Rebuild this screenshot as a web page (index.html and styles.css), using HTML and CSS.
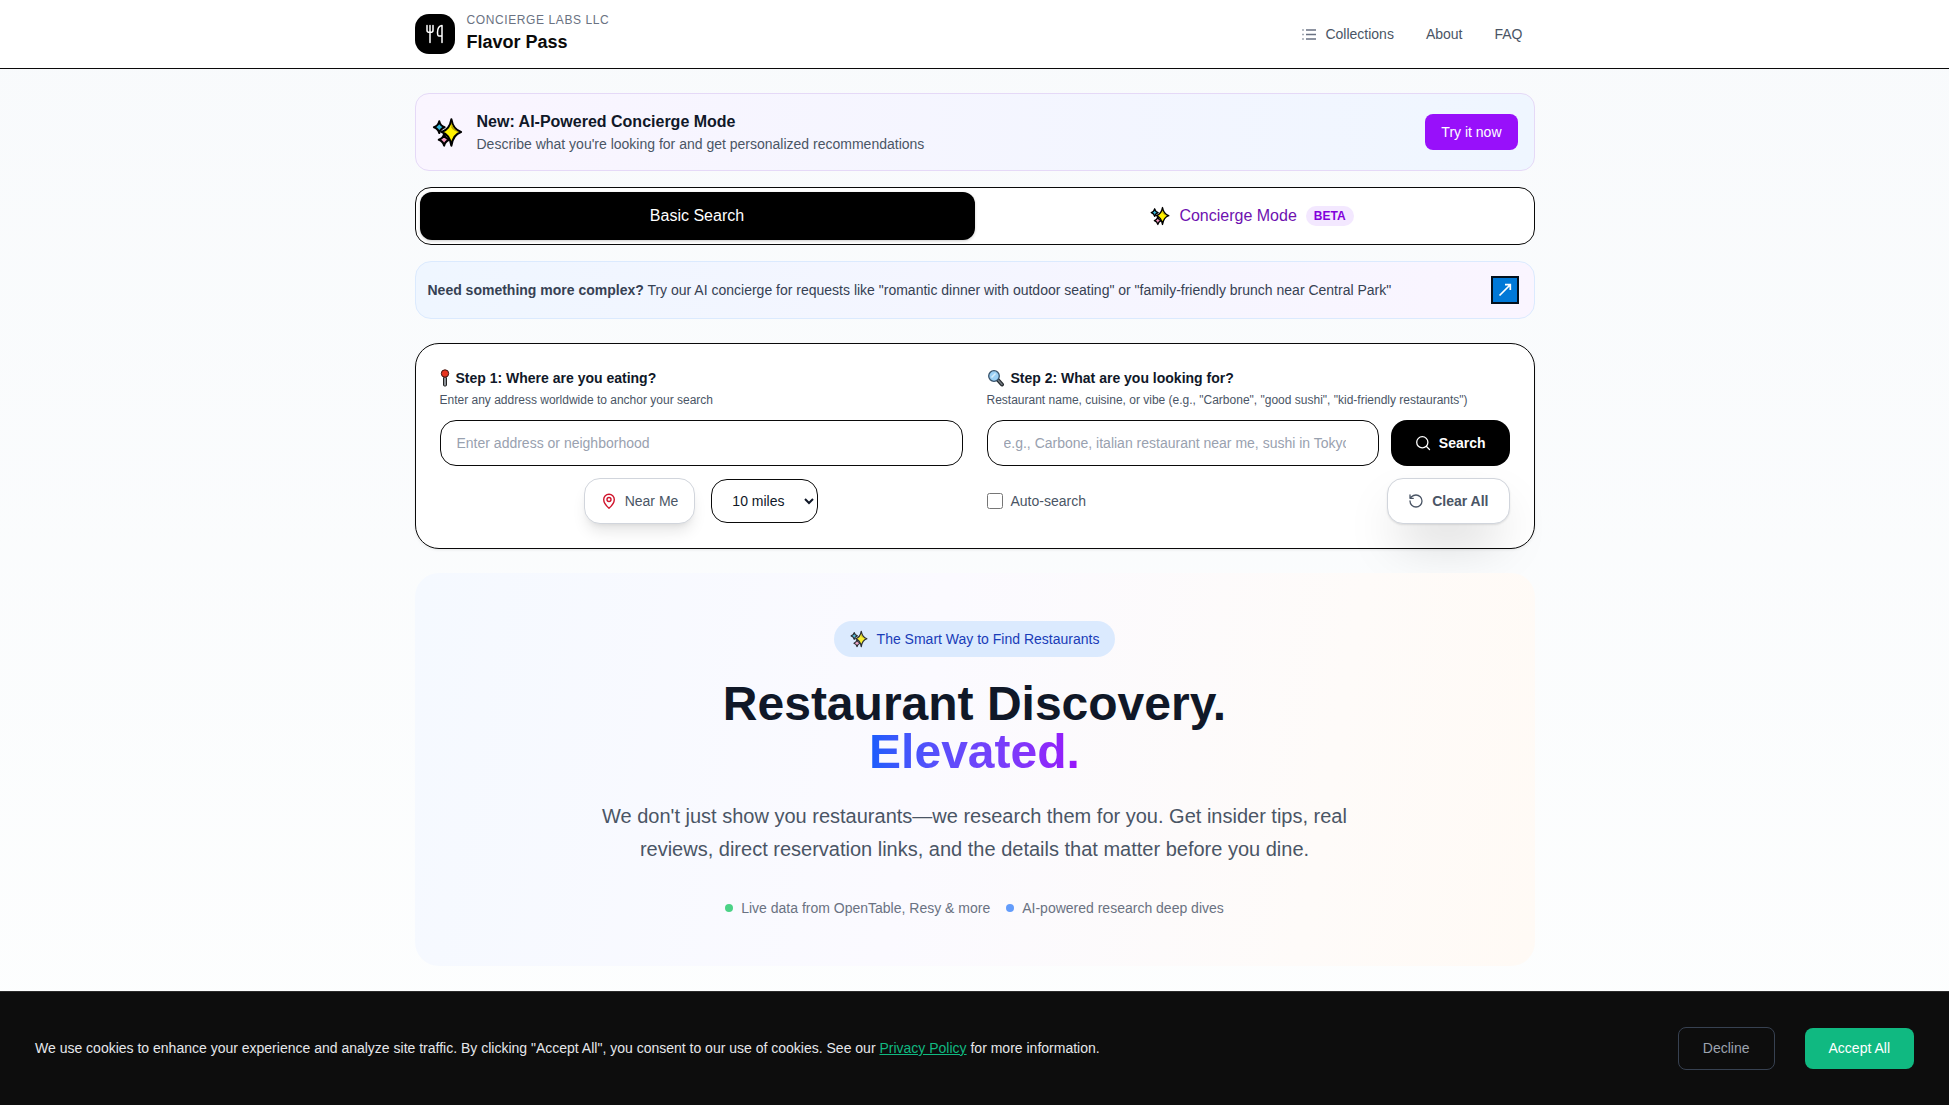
FILE: index.html
```html
<!DOCTYPE html>
<html lang="en">
<head>
<meta charset="utf-8">
<meta name="viewport" content="width=device-width, initial-scale=1">
<title>Flavor Pass</title>
<link rel="stylesheet" href="styles.css">
</head>
<body>
<svg class="defs" aria-hidden="true">
  <symbol id="sparkles" viewBox="0 0 32 32">
    <g stroke="#000" stroke-width="2.2" stroke-linejoin="round">
      <path fill="#35b8dc" d="M7.500 4.500Q8.500 9 13 10.500Q8.500 12 7.500 16.500Q6.500 12 2 10.500Q6.500 9 7.500 4.500Z"/>
      <path fill="#f59ac0" d="M12.500 17.500Q13.500 22 18 23.500Q13.500 25 12.500 29.500Q11.500 25 7 23.500Q11.500 22 12.500 17.500Z"/>
      <path fill="#fff100" d="M20 2.500Q21.800 13 30 15.500Q21.800 18 20 29.500Q18.200 18 10 15.500Q18.200 13 20 2.500Z"/>
    </g>
    <path fill="#b5a200" d="M20 5Q21.200 13 28 15.500Q22 14.500 20 11Z"/>
  </symbol>
</svg>

<header class="site-header">
  <div class="container header-row">
    <a class="brand" href="#">
      <span class="logo">
        <svg viewBox="0 0 20 20" width="20" height="20" fill="none" stroke="#fff" stroke-width="1.500" stroke-linecap="round" stroke-linejoin="round" aria-hidden="true">
          <path d="M2 1.500V6.500Q2 8.500 5 8.500Q8 8.500 8 6.500V1.500M5 1.500V18.500M17 18.500V1.500Q12.500 2 12.500 8.500Q12.500 12 14 12H17"/>
        </svg>
      </span>
      <span class="brand-text">
        <span class="company">Concierge Labs LLC</span>
        <span class="product">Flavor Pass</span>
      </span>
    </a>
    <nav class="nav">
      <a href="#"><svg viewBox="0 0 16 16" width="16" height="16" stroke="#6a7282" stroke-width="1.700" aria-hidden="true"><path d="M5 4H15M5 8.500H15M5 13H15"/><path stroke="#a3a9b3" d="M1 4H3M1 8.500H3M1 13H3"/></svg>Collections</a>
      <a href="#">About</a>
      <a href="#">FAQ</a>
    </nav>
  </div>
</header>

<main class="container main">
  <section class="announce">
    <svg class="announce-icon" viewBox="0 0 32 32" aria-hidden="true"><use href="#sparkles"/></svg>
    <div class="announce-text">
      <h2>New: AI-Powered Concierge Mode</h2>
      <p>Describe what you're looking for and get personalized recommendations</p>
    </div>
    <button class="try" type="button">Try it now</button>
  </section>

  <div class="tabs">
    <button class="tab active" type="button">Basic Search</button>
    <button class="tab" type="button"><svg width="20" height="20" aria-hidden="true"><use href="#sparkles"/></svg>Concierge Mode <span class="beta">BETA</span></button>
  </div>

  <section class="tip">
    <p><strong>Need something more complex?</strong> Try our AI concierge for requests like "romantic dinner with outdoor seating" or "family-friendly brunch near Central Park"</p>
    <button class="tip-go" type="button" aria-label="Open concierge">
      <svg viewBox="0 0 28 28" width="28" height="28" aria-hidden="true"><rect x="1" y="1" width="26" height="26" fill="#0078d7" stroke="#04101c" stroke-width="2"/><path d="M8.500 19.500L19 9M14 8.700H19.300V14" fill="none" stroke="#fff" stroke-width="1.700"/></svg>
    </button>
  </section>

  <form class="search-card">
    <div class="field">
      <label for="where"><svg class="pin" viewBox="0 0 10 18" width="10" height="18" aria-hidden="true"><rect x="3.500" y="8" width="3" height="9" rx="1" fill="#8d9298" stroke="#222" stroke-width="1"/><circle cx="5" cy="4.500" r="3.700" fill="#e8341f" stroke="#3d1511" stroke-width="1"/></svg>Step 1: Where are you eating?</label>
      <p class="hint">Enter any address worldwide to anchor your search</p>
      <input class="text-input" id="where" type="text" placeholder="Enter address or neighborhood">
      <div class="controls centered">
        <button class="near" type="button"><svg viewBox="0 0 16 16" width="16" height="16" fill="none" stroke="#d0142c" stroke-width="1.400" aria-hidden="true"><path d="M13.300 6.500C13.300 10 10 13.500 8 15.200C6 13.500 2.700 10 2.700 6.500A5.300 5.300 0 0 1 13.300 6.500Z"/><circle cx="8" cy="6.500" r="2"/></svg>Near Me</button>
        <select class="radius" aria-label="Distance"><option>10 miles</option><option>25 miles</option></select>
      </div>
    </div>
    <div class="field">
      <label for="what"><svg viewBox="0 0 18 18" width="18" height="18" aria-hidden="true"><path d="M10.500 10.500L15 15.500" stroke="#252a2e" stroke-width="4" stroke-linecap="round"/><path d="M11.500 11.500L15 15.500" stroke="#747b80" stroke-width="1.500" stroke-linecap="round"/><circle cx="7" cy="7" r="5.300" fill="#9bd0f5" stroke="#36516a" stroke-width="1.300"/><path d="M4.500 8.500L8.500 4.500" stroke="#d9effc" stroke-width="1.600"/></svg>Step 2: What are you looking for?</label>
      <p class="hint">Restaurant name, cuisine, or vibe (e.g., "Carbone", "good sushi", "kid-friendly restaurants")</p>
      <div class="query">
        <input class="text-input" id="what" type="text" placeholder="e.g., Carbone, italian restaurant near me, sushi in Tokyo">
        <button class="submit" type="button"><svg viewBox="0 0 16 16" width="16" height="16" fill="none" stroke="#fff" stroke-width="1.300" stroke-linecap="round" aria-hidden="true"><circle cx="7.300" cy="7.300" r="5.600"/><path d="M11.500 11.500L14.500 14.500"/></svg>Search</button>
      </div>
      <div class="controls spread">
        <label class="auto" for="auto"><input id="auto" type="checkbox">Auto-search</label>
        <button class="clear" type="button"><svg viewBox="0 0 16 16" width="16" height="16" fill="none" stroke="#4a5565" stroke-width="1.300" stroke-linecap="round" stroke-linejoin="round" aria-hidden="true"><path d="M2 8A6 6 0 1 0 8 2A6.500 6.500 0 0 0 3.500 3.800L2 5.300M2 2V5.300H5.300"/></svg>Clear All</button>
      </div>
    </div>
  </form>

  <section class="hero">
    <div class="pill"><svg width="18" height="18" aria-hidden="true"><use href="#sparkles"/></svg>The Smart Way to Find Restaurants</div>
    <h1>Restaurant Discovery.<br><span class="accent">Elevated.</span></h1>
    <p class="lead">We don't just show you restaurants—we research them for you. Get insider tips, real reviews, direct reservation links, and the details that matter before you dine.</p>
    <ul class="facts">
      <li>Live data from OpenTable, Resy &amp; more</li>
      <li class="blue">AI-powered research deep dives</li>
    </ul>
  </section>
</main>

<aside class="cookies">
  <p>We use cookies to enhance your experience and analyze site traffic. By clicking "Accept All", you consent to our use of cookies. See our <a href="#">Privacy Policy</a> for more information.</p>
  <div class="cookie-actions">
    <button class="decline" type="button">Decline</button>
    <button class="accept" type="button">Accept All</button>
  </div>
</aside>
</body>
</html>
```

FILE: styles.css
```css
* { box-sizing: border-box; }
body {
  margin: 0;
  min-height: 100vh;
  padding-bottom: 114px;
  font-family: "Liberation Sans", Arial, sans-serif;
  font-size: 14px;
  line-height: 20px;
  color: #101828;
  background: linear-gradient(#f8fafc, #fdfefe);
}
h1, h2, p, ul { margin: 0; padding: 0; }
button, input, select { font: inherit; color: inherit; margin: 0; }
button { border: 0; cursor: pointer; white-space: nowrap; }
svg { flex: none; display: block; }
.defs { position: absolute; width: 0; height: 0; }

.container { max-width: 1152px; margin: 0 auto; padding: 0 16px; }

.site-header { background: #fff; border-bottom: 1px solid #0a0a0a; }
.header-row { display: flex; align-items: center; justify-content: space-between; min-height: 68px; }
.brand { display: flex; align-items: center; gap: 12px; color: #0a0a0a; text-decoration: none; }
.logo { display: grid; place-items: center; width: 40px; height: 40px; border-radius: 14px; background: #000; }
.brand-text { display: flex; flex-direction: column; padding-bottom: 1px; }
.company { font-size: 12px; line-height: 16px; letter-spacing: 0.05em; text-transform: uppercase; color: #6a7282; }
.product { font-size: 18px; line-height: 28px; font-weight: 700; }
.nav { display: flex; gap: 8px; }
.nav a { display: flex; align-items: center; gap: 8px; padding: 8px 12px; color: #4a5565; text-decoration: none; }

.main { display: flex; flex-direction: column; padding-top: 24px; padding-bottom: 24px; }

.announce {
  display: flex; align-items: center; gap: 14px;
  padding: 16px;
  border: 1px solid #e5d9f7; border-radius: 14px;
  background: linear-gradient(90deg, #faf5ff, #eff6ff);
}
.announce-icon { width: 31px; height: 31px; }
.announce-text { flex: 1; }
.announce h2 { font-size: 16px; line-height: 24px; }
.announce p { color: #4a5565; }
.try { height: 36px; padding: 0 16px; border-radius: 8px; background: #9810fa; color: #fff; }

.tabs {
  display: grid; grid-template-columns: 1fr 1fr;
  margin-top: 16px; padding: 4px;
  border: 1px solid #0a0a0a; border-radius: 16px;
  background: #fff;
}
.tab {
  display: flex; align-items: center; justify-content: center; gap: 9px;
  height: 48px; border-radius: 12px;
  background: transparent; color: #6e11b0; font-size: 16px;
}
.tab.active { background: #000; color: #fff; box-shadow: 0 1px 3px rgba(0, 0, 0, 0.2); }
.beta { padding: 2px 8px; border-radius: 10px; background: #f3e8ff; color: #8200db; font-size: 12px; line-height: 16px; font-weight: 700; }

.tip {
  display: flex; align-items: center; justify-content: space-between; gap: 12px;
  margin-top: 16px; padding: 14px 15px 14px 12px;
  border: 1px solid #dbeafe; border-radius: 16px;
  background: linear-gradient(90deg, #eff6ff, #faf5ff);
  color: #364153;
}
.tip-go { padding: 0; background: transparent; }

.search-card {
  display: grid; grid-template-columns: 1fr 1fr; gap: 24px;
  margin-top: 24px; padding: 24px;
  border: 1px solid #0a0a0a; border-radius: 24px;
  background: #fff;
  box-shadow: 0 1px 3px rgba(0, 0, 0, 0.08);
}
.field { min-width: 0; }
.field > label { display: flex; align-items: center; gap: 6px; font-weight: 700; }
.hint { margin: 4px 0 12px; font-size: 12px; line-height: 16px; color: #4a5565; }
.text-input {
  display: block; width: 100%; min-width: 0; height: 46px; padding: 0 32px 0 16px;
  border: 1px solid #0a0a0a; border-radius: 16px; background: #fff;
}
.text-input::placeholder { color: #99a1af; }
.query { display: flex; gap: 12px; }
.controls { display: flex; align-items: center; gap: 16px; margin-top: 12px; }
.centered { justify-content: center; }
.spread { justify-content: space-between; }
.near, .submit, .clear { display: flex; align-items: center; gap: 8px; height: 46px; border-radius: 16px; background: #fff; }
.near {
  padding: 0 16px; border: 1px solid #d1d5dc; color: #4a5565;
  box-shadow: 0 10px 15px -3px rgba(0, 0, 0, 0.1), 0 4px 6px -4px rgba(0, 0, 0, 0.1);
}
.radius { width: 107px; height: 44px; padding: 0 0 0 16px; border: 1px solid #0a0a0a; border-radius: 16px; background: #fff; }
.submit { padding: 0 24px; background: #000; color: #fff; font-weight: 700; }
.clear {
  padding: 0 20px; border: 1px solid #d1d5dc; color: #4a5565; font-weight: 700;
  box-shadow: 0 25px 50px -12px rgba(0, 0, 0, 0.25), 0 1px 2px rgba(0, 0, 0, 0.1);
}
.auto { display: flex; align-items: center; gap: 8px; color: #4a5565; }
.auto input { width: 16px; height: 16px; }

.hero {
  display: flex; flex-direction: column; align-items: center;
  margin-top: 24px; padding: 48px 24px;
  border-radius: 24px; text-align: center;
  background: linear-gradient(100deg, #f5f9ff, #fbfaff 45%, #fefbf9 80%, #fffaf5);
}
.pill { display: flex; align-items: center; gap: 9px; padding: 8px 16px; border-radius: 18px; background: #dbeafe; color: #193cb8; }
.pill svg { opacity: 0.8; }
.hero h1 { margin-top: 23px; font-size: 48px; line-height: 48px; }
.accent { background: linear-gradient(90deg in oklab, #155dfc, #9810fa); background-clip: text; -webkit-background-clip: text; color: transparent; }
.lead { max-width: 768px; margin-top: 24px; font-size: 20px; line-height: 33px; color: #4a5565; }
.facts { display: flex; gap: 16px; margin-top: 32px; list-style: none; color: #6a7282; }
.facts li { display: flex; align-items: center; gap: 8px; }
.facts li::before { content: ""; width: 8px; height: 8px; border-radius: 50%; background: #4bd286; }
.facts .blue::before { background: #639cfb; }

.cookies {
  position: fixed; left: 0; right: 0; bottom: 0;
  display: flex; align-items: center; justify-content: space-between; gap: 32px;
  min-height: 114px; padding: 32px 35px 33px;
  border-top: 1px solid #2a2a2a;
  background: #0d0d0d; color: #e5e7eb;
}
.cookies a { color: #10b981; }
.cookie-actions { display: flex; align-items: center; gap: 30px; }
.decline { height: 43px; padding: 0 24px; border: 1px solid #374151; border-radius: 8px; background: transparent; color: #9ca3af; }
.accept { height: 41px; padding: 0 24px; border-radius: 8px; background: #10b981; color: #fff; }
```
